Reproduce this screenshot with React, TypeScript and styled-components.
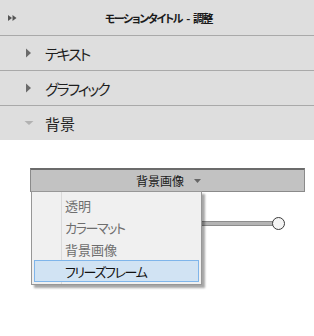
import React from 'react';
import styled, { createGlobalStyle } from 'styled-components';

const GlobalStyle = createGlobalStyle`
  html, body {
    margin: 0;
    padding: 0;
    background: #ffffff;
    overflow: hidden;
  }
  body {
    font-family: "Noto Sans CJK JP", "Liberation Sans", sans-serif;
    font-feature-settings: "palt";
  }
`;

const Panel = styled.div`
  width: 314px;
  height: 336px;
  display: flex;
  flex-direction: column;
  background: #ffffff;
`;

const Header = styled.div`
  height: 35px;
  border-bottom: 1px solid #a9a9a9;
  background: #dedede;
  display: flex;
  align-items: center;
`;

const CollapseIcon = styled.svg`
  width: 9px;
  height: 6px;
  margin-left: 8px;
  flex-shrink: 0;
`;

const HeaderTitle = styled.div`
  flex: 1;
  text-align: center;
  font-size: 11px;
  font-weight: bold;
  color: #1a1a1a;
  padding-right: 14px;
  letter-spacing: -1.4px;
  word-spacing: 3px;
`;

const SectionRow = styled.div<{ $last?: boolean }>`
  height: 34px;
  border-bottom: ${p => (p.$last ? 'none' : '1px solid #a9a9a9')};
  background: #dedede;
  display: flex;
  align-items: center;
  padding-left: 24px;
  gap: 11px;
`;

const SectionLabel = styled.span<{ $kana?: boolean }>`
  font-size: 15px;
  color: #1e1e1e;
  letter-spacing: ${p => (p.$kana ? '-2px' : '0')};
`;

const Arrow = styled.svg`
  width: 10px;
  height: 10px;
  flex-shrink: 0;
`;

const Body = styled.div`
  flex: 1;
  background: #ffffff;
  padding: 28px 9px 0 30px;
`;

const DropdownWrap = styled.div`
  position: relative;
`;

const DropdownButton = styled.div`
  height: 21px;
  border: 1px solid #8a8a8a;
  border-top: 2px solid #6b6b6b;
  background: #c2c2c2;
  display: flex;
  align-items: center;
  justify-content: center;
  gap: 10px;
  font-size: 12px;
  color: #1a1a1a;
  padding-left: 2px;
`;

const Caret = styled.svg`
  width: 7px;
  height: 4px;
`;

const SliderRow = styled.div`
  height: 14px;
  margin-top: 24px;
  display: flex;
  align-items: center;
  padding-left: 20px;
`;

const SliderTrack = styled.div`
  flex: 0 0 223px;
  height: 3px;
  background: #b4b4b4;
  border-top: 1px solid #8c8c8c;
  border-bottom: 1px solid #8c8c8c;
`;

const SliderKnob = styled.div`
  width: 11px;
  height: 11px;
  border-radius: 50%;
  border: 1px solid #3a3a3a;
  background: #f4f4f4;
  margin-left: -1px;
`;

const Menu = styled.div`
  position: absolute;
  left: 1px;
  top: 23px;
  width: 165px;
  padding: 2px;
  background: #f0f0f0;
  border: 1px solid #979797;
  box-shadow: 3px 3px 2px rgba(0, 0, 0, 0.35);
  z-index: 2;
`;

const Gutter = styled.div`
  position: absolute;
  left: 29px;
  top: 0;
  bottom: 0;
  width: 1px;
  background: #dadada;
`;

const MenuItem = styled.div<{ $active?: boolean; $kana?: boolean }>`
  position: relative;
  height: ${p => (p.$active ? '20px' : '22px')};
  display: flex;
  align-items: center;
  padding-left: ${p => (p.$active ? '30px' : '31px')};
  font-size: 13px;
  letter-spacing: ${p => (p.$kana ? '-1.4px' : '0')};
  color: ${p => (p.$active ? '#111111' : '#6e6e6e')};
  background: ${p => (p.$active ? '#d1e3f3' : 'transparent')};
  border: ${p => (p.$active ? '1px solid #7fb5ea' : 'none')};
`;

const RightArrow = ({ color }: { color: string }) => (
  <Arrow viewBox="0 0 10 10">
    <polygon points="2,0.5 7,5 2,9.5" fill={color} />
  </Arrow>
);

const DownArrow = ({ color }: { color: string }) => (
  <Arrow viewBox="0 0 10 10">
    <polygon points="0.5,3 9.5,3 5,7" fill={color} />
  </Arrow>
);

const menuItems = [
  { label: '透明', kana: false },
  { label: 'カラーマット', kana: true },
  { label: '背景画像', kana: false },
  { label: 'フリーズフレーム', kana: true },
];

const App: React.FC = () => {
  return (
    <>
      <GlobalStyle />
      <Panel>
        <Header>
          <CollapseIcon viewBox="0 0 9 6">
            <polygon points="0,0 4,3 0,6" fill="#555" />
            <polygon points="4.5,0 8.5,3 4.5,6" fill="#555" />
          </CollapseIcon>
          <HeaderTitle>モーションタイトル - 調整</HeaderTitle>
        </Header>
        <SectionRow>
          <RightArrow color="#6a6a6a" />
          <SectionLabel $kana>テキスト</SectionLabel>
        </SectionRow>
        <SectionRow>
          <RightArrow color="#6a6a6a" />
          <SectionLabel $kana>グラフィック</SectionLabel>
        </SectionRow>
        <SectionRow $last>
          <DownArrow color="#b2b2b2" />
          <SectionLabel>背景</SectionLabel>
        </SectionRow>
        <Body>
          <DropdownWrap>
            <DropdownButton>
              <span>背景画像</span>
              <Caret viewBox="0 0 7 4">
                <polygon points="0,0 7,0 3.5,4" fill="#666" />
              </Caret>
            </DropdownButton>
            <SliderRow>
              <SliderTrack />
              <SliderKnob />
            </SliderRow>
            <Menu>
              <Gutter />
              {menuItems.map((item, i) => (
                <MenuItem key={item.label} $kana={item.kana} $active={i === menuItems.length - 1}>
                  {item.label}
                </MenuItem>
              ))}
            </Menu>
          </DropdownWrap>
        </Body>
      </Panel>
    </>
  );
};

export default App;
